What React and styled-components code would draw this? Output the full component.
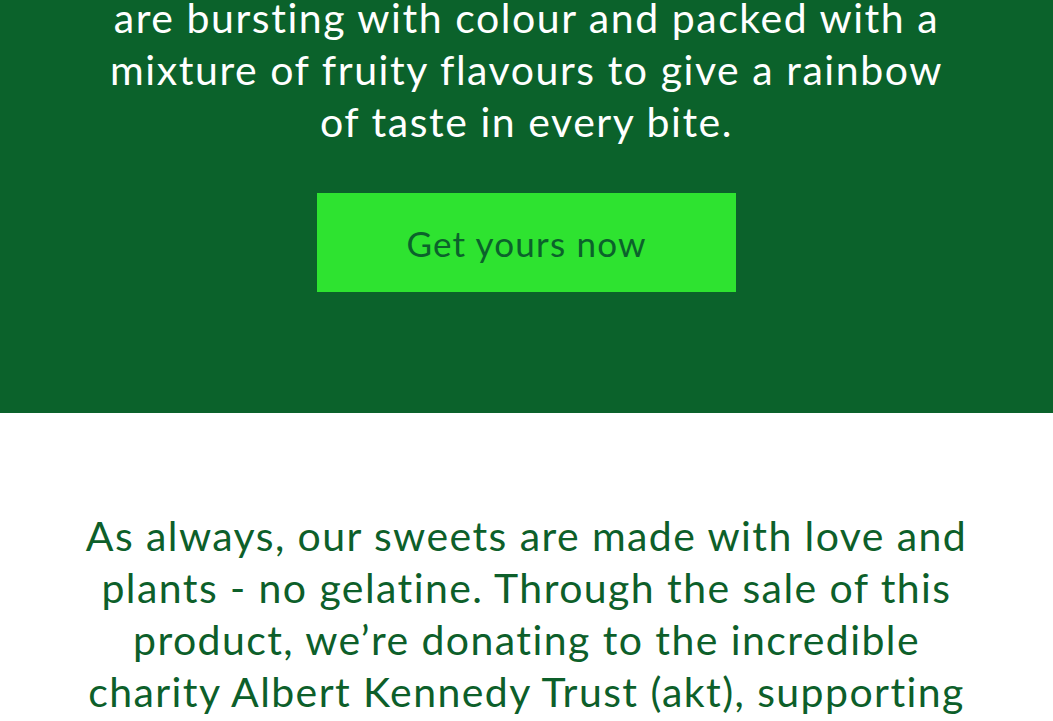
import React from "react";
import styled, { createGlobalStyle } from "styled-components";

const GlobalStyle = createGlobalStyle`
  html, body {
    margin: 0;
    padding: 0;
    background: #ffffff;
    overflow: hidden;
  }
  body {
    font-family: Lato, "Noto Sans", sans-serif;
    font-variant-ligatures: none;
  }
`;

const Page = styled.div`
  width: 100%;
  display: flex;
  flex-direction: column;
`;

const Hero = styled.section`
  background: #0b622b;
  height: 413px;
  display: flex;
  flex-direction: column;
  align-items: center;
  overflow: hidden;
`;

const Blurb = styled.p`
  margin: ${(p) => p.$top}px 0 0;
  font-size: 41px;
  line-height: 52px;
  letter-spacing: ${(p) => p.$spacing}px;
  text-align: center;
  color: ${(p) => p.$color};
  font-weight: 400;
  white-space: nowrap;
`;

const CtaButton = styled.a`
  display: flex;
  align-items: center;
  justify-content: center;
  width: 419px;
  height: 99px;
  margin-top: 45px;
  background: #2ee330;
  color: #0b622b;
  font-size: 35px;
  letter-spacing: 1.2px;
  text-decoration: none;
  cursor: pointer;
`;

const Story = styled.section`
  display: flex;
  justify-content: center;
  padding-top: 97px;
`;

export default function App() {
  return (
    <Page>
      <GlobalStyle />
      <Hero>
        <Blurb $top={-8} $spacing={1.55} $color="#ffffff">
          are bursting with colour and packed with a
          <br />
          mixture of fruity flavours to give a rainbow
          <br />
          of taste in every bite.
        </Blurb>
        <CtaButton>Get yours now</CtaButton>
      </Hero>
      <Story>
        <Blurb $top={0} $spacing={1.42} $color="#0d5f2a">
          As always, our sweets are made with love and
          <br />
          plants - no gelatine. Through the sale of this
          <br />
          product, we’re donating to the incredible
          <br />
          charity Albert Kennedy Trust (akt), supporting
        </Blurb>
      </Story>
    </Page>
  );
}
